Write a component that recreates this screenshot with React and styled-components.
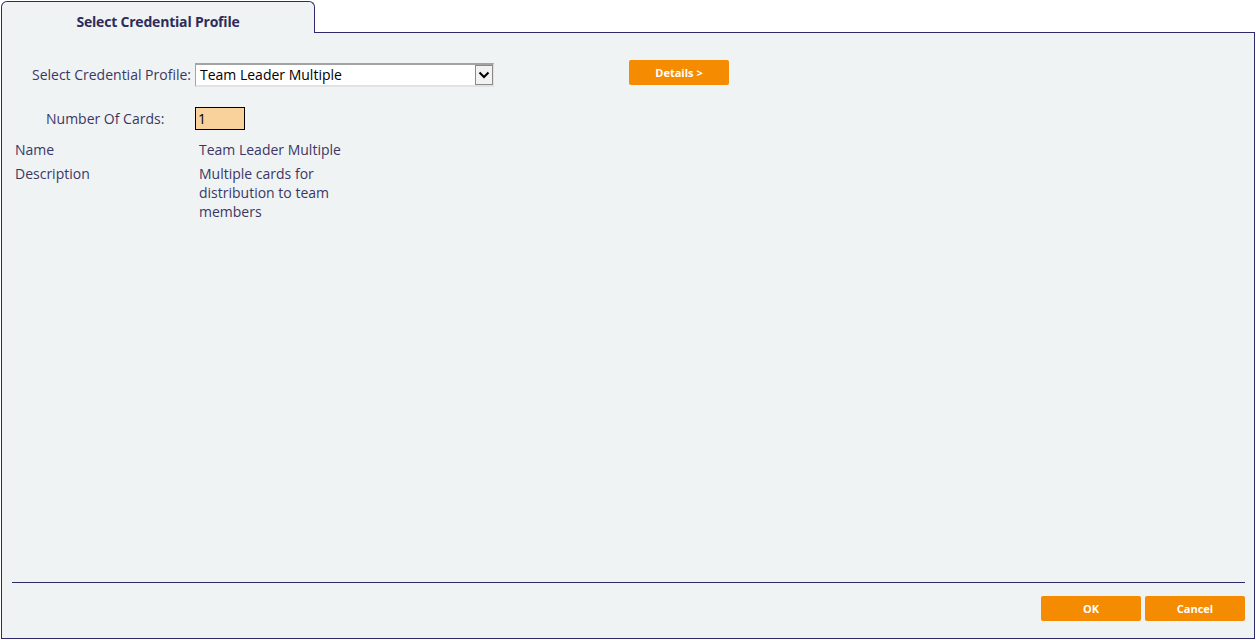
import React from 'react';
import styled, { createGlobalStyle } from 'styled-components';

const GlobalStyle = createGlobalStyle`
  html, body {
    margin: 0;
    padding: 0;
    background: #ffffff;
  }
  body {
    font-family: "Open Sans", "Noto Sans", sans-serif;
  }
`;

const navy = '#2f2b6b';
const ink = '#3b3764';
const orange = '#f48b00';
const panelBg = '#eff3f4';

const Root = styled.div`
  width: 1254px;
  height: 638px;
  margin: 1px 0 0 1px;
  display: flex;
  flex-direction: column;
`;

const TabBar = styled.div`
  display: flex;
  height: 32px;
`;

const Tab = styled.div`
  width: 314px;
  box-sizing: border-box;
  border: 1px solid ${navy};
  border-bottom: none;
  border-radius: 6px 6px 0 0;
  background: ${panelBg};
  display: flex;
  align-items: center;
  justify-content: center;
  padding-top: 8px;
  font-size: 14px;
  font-weight: 700;
  color: #2e2b5c;
  letter-spacing: -0.2px;
`;

const TabFiller = styled.div`
  flex: 1;
  border-bottom: 1px solid ${navy};
`;

const Panel = styled.div`
  flex: 1;
  display: flex;
  flex-direction: column;
  background: ${panelBg};
  border: 1px solid ${navy};
  border-top: none;
`;

const Form = styled.div`
  flex: 1;
  display: flex;
  flex-direction: column;
`;

const FieldRow = styled.div`
  display: flex;
  align-items: flex-start;
  margin-top: ${p => p.$top}px;
`;

const FieldLabel = styled.div`
  width: 193px;
  box-sizing: border-box;
  text-align: ${p => (p.$right ? 'right' : 'left')};
  padding: ${p => (p.$right ? '0 4px 0 0' : '0 0 0 44px')};
  margin-top: ${p => p.$offset}px;
  height: ${p => p.$h}px;
  line-height: ${p => p.$h}px;
  font-size: 14px;
  color: ${ink};
  white-space: nowrap;
`;

const SelectBox = styled.div`
  width: 299px;
  height: 24px;
  margin-top: 3px;
  box-sizing: border-box;
  display: flex;
  align-items: center;
  background: #ffffff;
  border-top: 2px solid #a3a3a3;
  border-left: 1px solid #a3a3a3;
  border-right: 1px solid #e2e2e2;
  border-bottom: 2px solid #e2e2e2;
`;

const SelectValue = styled.div`
  flex: 1;
  padding-left: 4px;
  font-size: 14px;
  color: #000000;
  line-height: 20px;
`;

const SelectArrow = styled.div`
  width: 18px;
  height: 20px;
  box-sizing: border-box;
  border: 1px solid #8a8a8a;
  background: #f2f2f2;
  display: flex;
  align-items: center;
  justify-content: center;
`;

const OrangeButton = styled.button`
  width: ${p => p.$w}px;
  height: 25px;
  margin-left: ${p => p.$ml || 0}px;
  border: none;
  border-radius: 2px;
  background: ${orange};
  color: #ffffff;
  font-family: "Open Sans", "Noto Sans", sans-serif;
  font-size: 11px;
  font-weight: 700;
  padding: 0;
  cursor: pointer;
`;

const CountInput = styled.input`
  width: 50px;
  height: 23px;
  box-sizing: border-box;
  border: 1px solid #000000;
  background: #f9d19b;
  font-family: "Open Sans", "Noto Sans", sans-serif;
  font-size: 14px;
  color: #000000;
  padding: 0 0 0 2px;
  outline: none;
`;

const InfoList = styled.div`
  display: flex;
  flex-direction: column;
  gap: 5px;
  margin-top: 10px;
  padding-left: 13px;
`;

const InfoRow = styled.div`
  display: flex;
  font-size: 14px;
  line-height: 19px;
  color: ${ink};
`;

const InfoKey = styled.div`
  width: 184px;
`;

const InfoValue = styled.div`
  width: 150px;
`;

const Footer = styled.div`
  display: flex;
  flex-direction: column;
  padding: 0 9px 17px 10px;
`;

const Rule = styled.div`
  height: 1px;
  background: ${navy};
`;

const ButtonBar = styled.div`
  display: flex;
  justify-content: flex-end;
  gap: 4px;
  margin-top: 13px;
`;

const Chevron = () => (
  <svg width="12" height="8" viewBox="0 0 12 8">
    <path d="M1.5 1.5 L6 6 L10.5 1.5" fill="none" stroke="#000" strokeWidth="2" />
  </svg>
);

const App = () => (
  <>
    <GlobalStyle />
    <Root>
      <TabBar>
        <Tab>Select Credential Profile</Tab>
        <TabFiller />
      </TabBar>
      <Panel>
        <Form>
          <FieldRow $top={27}>
            <FieldLabel $right $offset={3} $h={24}>Select Credential Profile:</FieldLabel>
            <SelectBox>
              <SelectValue>Team Leader Multiple</SelectValue>
              <SelectArrow>
                <Chevron />
              </SelectArrow>
            </SelectBox>
            <OrangeButton $w={100} $ml={135}>Details &gt;</OrangeButton>
          </FieldRow>
          <FieldRow $top={20}>
            <FieldLabel $offset={0} $h={23}>Number Of Cards:</FieldLabel>
            <CountInput defaultValue="1" />
          </FieldRow>
          <InfoList>
            <InfoRow>
              <InfoKey>Name</InfoKey>
              <InfoValue>Team Leader Multiple</InfoValue>
            </InfoRow>
            <InfoRow>
              <InfoKey>Description</InfoKey>
              <InfoValue>Multiple cards for distribution to team members</InfoValue>
            </InfoRow>
          </InfoList>
        </Form>
        <Footer>
          <Rule />
          <ButtonBar>
            <OrangeButton $w={100}>OK</OrangeButton>
            <OrangeButton $w={100}>Cancel</OrangeButton>
          </ButtonBar>
        </Footer>
      </Panel>
    </Root>
  </>
);

export default App;
